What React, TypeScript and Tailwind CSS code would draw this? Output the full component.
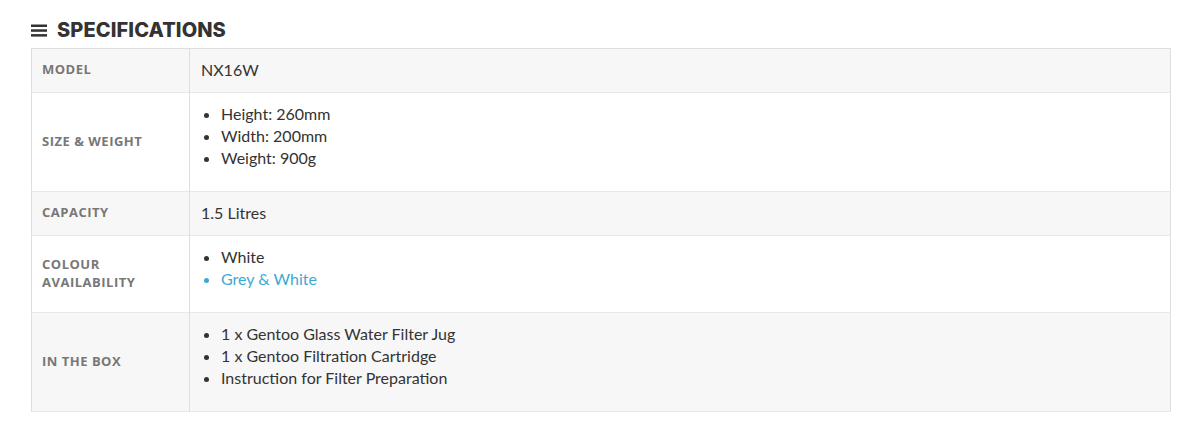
import React from "react";

const rows: { label: string[]; items?: { text: string; link?: boolean }[]; value?: string; bg: string }[] = [
  { label: ["MODEL"], value: "NX16W", bg: "bg-[#f7f7f7]" },
  {
    label: ["SIZE & WEIGHT"],
    items: [{ text: "Height: 260mm" }, { text: "Width: 200mm" }, { text: "Weight: 900g" }],
    bg: "bg-white",
  },
  { label: ["CAPACITY"], value: "1.5 Litres", bg: "bg-[#f7f7f7]" },
  {
    label: ["COLOUR", "AVAILABILITY"],
    items: [{ text: "White" }, { text: "Grey & White", link: true }],
    bg: "bg-white",
  },
  {
    label: ["IN THE BOX"],
    items: [
      { text: "1 x Gentoo Glass Water Filter Jug" },
      { text: "1 x Gentoo Filtration Cartridge" },
      { text: "Instruction for Filter Preparation" },
    ],
    bg: "bg-[#f7f7f7]",
  },
];

export default function App() {
  return (
    <div className="w-[1204px] h-[440px] bg-white pt-[19px] pl-[31px]">
      <div className="flex items-center gap-[10px] h-[22px]">
        <svg width="16" height="13" viewBox="0 0 16 13">
          <rect x="0" y="0.5" width="16" height="2.5" fill="#333" />
          <rect x="0" y="5.3" width="16" height="2.5" fill="#333" />
          <rect x="0" y="10.1" width="16" height="2.5" fill="#333" />
        </svg>
        <h2 className="text-[20px] font-extrabold text-[#333] tracking-[0.1px] leading-none" style={{ fontFamily: "Inter, 'Open Sans', sans-serif" }}>
          SPECIFICATIONS
        </h2>
      </div>
      <table className="mt-[7px] w-[1140px] border-collapse border border-[#dedede]">
        <tbody>
          {rows.map((r, i) => (
            <tr key={i} className={`${r.bg} border-b border-[#e8e8e8]`}>
              <td
                className="w-[158px] align-middle pl-[10px] pr-[8px] pb-[3px] border-r border-[#dedede] text-[13px] font-bold text-[#777] leading-[18px] tracking-[0.5px]"
                style={{ fontFamily: "'Open Sans', Inter, sans-serif" }}
              >
                {r.label.map((l, j) => (
                  <div key={j}>{l}</div>
                ))}
              </td>
              <td
                className="align-top pl-[11px] pt-[10px] pb-[11px] text-[16px] leading-[22px] text-[#333]"
                style={{ fontFamily: "Lato, 'Open Sans', sans-serif" }}
              >
                {r.value ? (
                  <div>{r.value}</div>
                ) : (
                  <ul className="list-disc pl-[20px] mb-[11px]">
                    {r.items!.map((it, k) => (
                      <li key={k} className={it.link ? "text-[#3ba9d6]" : ""}>
                        {it.text}
                      </li>
                    ))}
                  </ul>
                )}
              </td>
            </tr>
          ))}
        </tbody>
      </table>
    </div>
  );
}
